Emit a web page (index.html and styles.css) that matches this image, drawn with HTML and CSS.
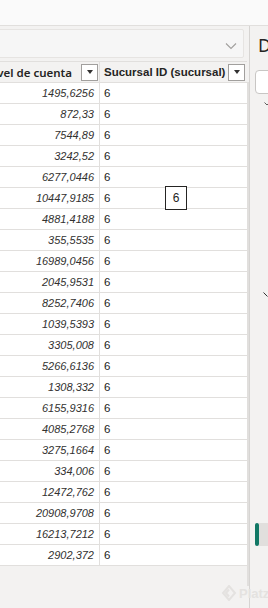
FILE: index.html
```html
<!DOCTYPE html>
<html lang="es">
<head>
<meta charset="utf-8">
<title>Tabla</title>
<link rel="stylesheet" href="styles.css">
</head>
<body>
<div class="top"></div>
<div class="main">
  <div class="left">
    <div class="formula">
      <svg class="chev" width="12" height="8" viewBox="0 0 12 8"><path d="M1 1.5 L6 6.5 L11 1.5" fill="none" stroke="#a19f9d" stroke-width="1.1"/></svg>
    </div>
    <div class="tablewrap">
      <div class="table">
        <div class="row head">
          <div class="c1"><span class="ht">Nivel de cuenta</span><span class="fbtn"><i></i></span></div>
          <div class="c2"><span class="ht">Sucursal ID (sucursal)</span><span class="fbtn"><i></i></span></div>
        </div>
        <div class="row"><div class="c1 num">1495,6256</div><div class="c2">6</div></div>
        <div class="row"><div class="c1 num">872,33</div><div class="c2">6</div></div>
        <div class="row"><div class="c1 num">7544,89</div><div class="c2">6</div></div>
        <div class="row"><div class="c1 num">3242,52</div><div class="c2">6</div></div>
        <div class="row"><div class="c1 num">6277,0446</div><div class="c2">6</div></div>
        <div class="row"><div class="c1 num">10447,9185</div><div class="c2">6<span class="tip">6</span></div></div>
        <div class="row"><div class="c1 num">4881,4188</div><div class="c2">6</div></div>
        <div class="row"><div class="c1 num">355,5535</div><div class="c2">6</div></div>
        <div class="row"><div class="c1 num">16989,0456</div><div class="c2">6</div></div>
        <div class="row"><div class="c1 num">2045,9531</div><div class="c2">6</div></div>
        <div class="row"><div class="c1 num">8252,7406</div><div class="c2">6</div></div>
        <div class="row"><div class="c1 num">1039,5393</div><div class="c2">6</div></div>
        <div class="row"><div class="c1 num">3305,008</div><div class="c2">6</div></div>
        <div class="row"><div class="c1 num">5266,6136</div><div class="c2">6</div></div>
        <div class="row"><div class="c1 num">1308,332</div><div class="c2">6</div></div>
        <div class="row"><div class="c1 num">6155,9316</div><div class="c2">6</div></div>
        <div class="row"><div class="c1 num">4085,2768</div><div class="c2">6</div></div>
        <div class="row"><div class="c1 num">3275,1664</div><div class="c2">6</div></div>
        <div class="row"><div class="c1 num">334,006</div><div class="c2">6</div></div>
        <div class="row"><div class="c1 num">12472,762</div><div class="c2">6</div></div>
        <div class="row"><div class="c1 num">20908,9708</div><div class="c2">6</div></div>
        <div class="row"><div class="c1 num">16213,7212</div><div class="c2">6</div></div>
        <div class="row"><div class="c1 num">2902,372</div><div class="c2">6</div></div>
      </div>
      <div class="scroll"></div>
    </div>
  </div>
  <div class="right">
    <div class="ptitle">D</div>
    <div class="pbtn"></div>
    <svg class="pchev" width="6" height="4" viewBox="0 0 6 4"><path d="M0.5 0.5 L3 3 L5.5 0.5" fill="none" stroke="#605e5c" stroke-width="1"/></svg>
    <svg class="pdiag" width="5" height="5" viewBox="0 0 5 5"><path d="M0.5 0.5 L4.5 4.5" fill="none" stroke="#323130" stroke-width="1"/></svg>
    <div class="ptab"><span class="gbar"></span><span class="gbox"></span></div>
  </div>
</div>
<div class="wm"><svg width="16" height="16" viewBox="0 0 16 16"><path d="M8 1 L14 8 L8 15 L2 8 Z M8 4.5 L5 8 L8 11.5" fill="none" stroke="#e4e2e0" stroke-width="2"/></svg><span>Platzi</span></div>
</body>
</html>
```
FILE: styles.css
```css
html, body {
  margin: 0;
  padding: 0;
}
body {
  width: 268px;
  height: 608px;
  overflow: hidden;
  background: #f3f2f1;
  font-family: "Noto Sans", "Liberation Sans", sans-serif;
  color: #252423;
  position: relative;
}
.top {
  height: 25px;
  background: #fafafa;
  border-bottom: 1px solid #e1dfdd;
}
.main {
  display: flex;
  height: 582px;
}
.left {
  width: 249px;
  flex: none;
  overflow: hidden;
}
.formula {
  margin-top: 3px;
  margin-left: -10px;
  width: 246px;
  height: 27px;
  border: 1px solid #e6e4e2;
  border-radius: 2px;
  background: #f6f6f6;
  display: flex;
  align-items: center;
  justify-content: flex-end;
  padding-right: 6px;
  box-sizing: content-box;
}
.chev {
  display: block;
  margin-top: 4px;
}
.tablewrap {
  margin-top: 3px;
  display: flex;
  align-items: flex-start;
}
.table {
  margin-left: -40px;
  width: 287px;
  flex: none;
  background: #ffffff;
}
.row {
  display: flex;
  height: 20px;
  border-bottom: 1px solid #e1dfdd;
  font-size: 11px;
}
.row.head {
  background: #f3f2f1;
  border-top: 1px solid #e1dfdd;
  height: 20px;
}
.c1 {
  width: 140px;
  flex: none;
  border-right: 1px solid #e1dfdd;
  box-sizing: border-box;
  display: flex;
  align-items: center;
}
.c2 {
  flex: 1;
  display: flex;
  align-items: center;
  padding-left: 4px;
  position: relative;
}
.head .c1 {
  justify-content: flex-end;
  gap: 9px;
  padding-right: 1px;
}
.head .c2 {
  justify-content: space-between;
  padding-right: 2px;
}
.ht {
  font-weight: 600;
  font-size: 11.5px;
  color: #252423;
  white-space: nowrap;
}
.fbtn {
  width: 15px;
  height: 15px;
  border: 1px solid #a19f9d;
  background: #ffffff;
  display: flex;
  align-items: center;
  justify-content: center;
  flex: none;
}
.fbtn i {
  width: 0;
  height: 0;
  border-left: 3.5px solid transparent;
  border-right: 3.5px solid transparent;
  border-top: 4px solid #323130;
}
.num {
  justify-content: flex-end;
  padding-right: 5px;
  font-family: "Liberation Sans", sans-serif;
  font-style: italic;
  font-size: 11px;
  color: #323130;
}
.c2 {
  font-family: "Liberation Sans", sans-serif;
  font-size: 11.5px;
  color: #252423;
}
.tip {
  position: absolute;
  left: 65px;
  top: -2px;
  width: 20px;
  height: 22px;
  border: 1px solid #252423;
  background: #ffffff;
  display: flex;
  align-items: center;
  justify-content: center;
  font-size: 12px;
}
.scroll {
  width: 2px;
  height: 504px;
  margin-top: 21px;
  background: #e1dfdd;
  flex: none;
}
.right {
  flex: 1;
  border-left: 1px solid #d6d4d2;
  position: relative;
  overflow: hidden;
}
.ptitle {
  margin-top: 9px;
  margin-left: 8px;
  font-size: 18px;
  line-height: 20px;
  color: #252423;
}
.pbtn {
  margin-top: 15px;
  margin-left: 5px;
  width: 30px;
  height: 22px;
  border: 1px solid #c8c6c4;
  border-radius: 4px;
  background: #ffffff;
}
.pchev {
  display: block;
  margin-top: 8px;
  margin-left: 14px;
}
.pdiag {
  display: block;
  margin-top: 186px;
  margin-left: 13px;
}
.ptab {
  display: flex;
  margin-top: 226px;
  margin-left: 5px;
  height: 23px;
}
.gbar {
  width: 4px;
  background: #117865;
  border-radius: 2px;
}
.gbox {
  flex: 1;
  width: 20px;
  background: #e1dfdd;
}
.wm {
  position: absolute;
  left: 221px;
  top: 585px;
  display: flex;
  align-items: center;
  gap: 2px;
  font-family: "Liberation Sans", sans-serif;
  font-weight: 700;
  font-size: 13px;
  color: #e4e2e0;
}
```
